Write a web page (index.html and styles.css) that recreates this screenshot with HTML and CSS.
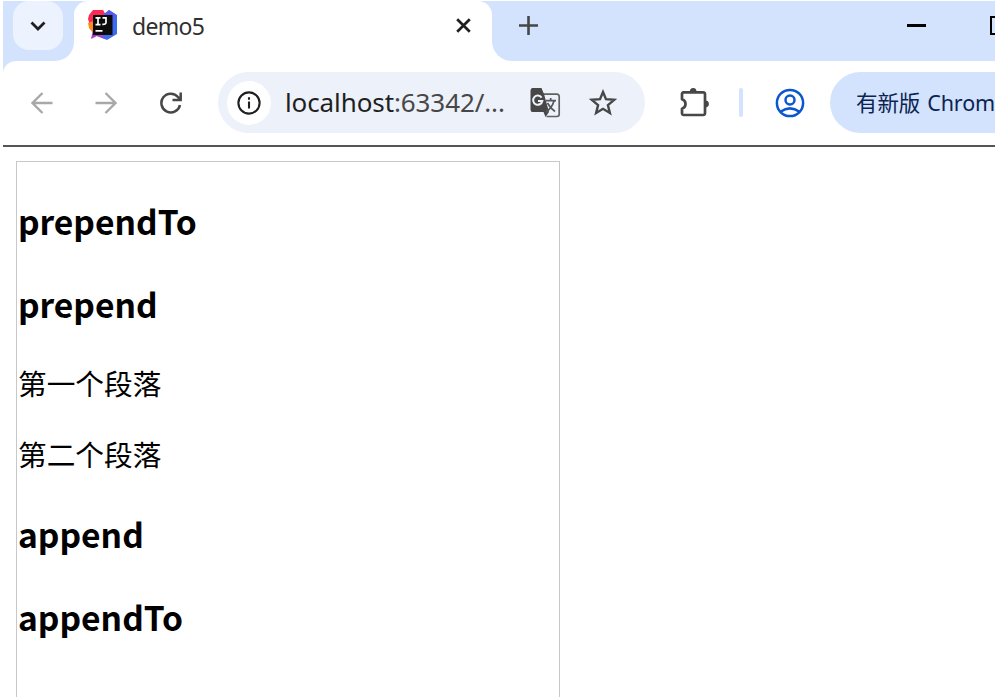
FILE: index.html
```html
<!DOCTYPE html>
<html lang="zh-CN">
<head>
    <meta charset="UTF-8">
    <title>demo5</title>
    <link rel="stylesheet" href="styles.css">
</head>
<body>
    <div class="browser">
        <div class="tab-strip">
            <div class="strip-left">
                <div class="tab-search">
                    <svg width="16" height="10" viewBox="0 0 16 10" fill="none" stroke="#1f1f1f" stroke-width="2.8"><path d="M1.5 1.5L8 8L14.5 1.5"/></svg>
                </div>
            </div>
            <div class="tab-slot">
                <div class="tab">
                    <svg class="favicon" width="30" height="30" viewBox="0 0 30 30">
                        <path d="M1 5L5 0H15L18 5L11 18L2 15L0 9Z" fill="#fe2857"/>
                        <path d="M0 13L6 11L10 22L5 23L1 18Z" fill="#ff8a1e"/>
                        <path d="M16 4L21 0L29 5V24L19 30L9 26Z" fill="#3b6bee"/>
                        <path d="M17 4L21 0L27 4L25 12H17Z" fill="#5b57f5"/>
                        <path d="M5 20L12 22L17 29L9 26L3 29Z" fill="#a73bd0"/>
                        <rect x="5" y="5" width="19.5" height="20" fill="#0b0b0b"/>
                        <path d="M7.5 7.8H12.5M10 7.8V14.6M7.5 14.6H12.5M14.5 7.8H18V12.5Q18 14.6 14.3 14.4M7.5 20.8H14.5" fill="none" stroke="#fff" stroke-width="1.7"/>
                    </svg>
                    <span class="tab-title">demo5</span>
                    <svg class="tab-close" width="15" height="15" viewBox="0 0 15 15" stroke="#1f1f1f" stroke-width="2.7"><path d="M1.2 1.2L13.8 13.8M13.8 1.2L1.2 13.8"/></svg>
                </div>
            </div>
            <div class="strip-right">
                <svg width="19" height="19" viewBox="0 0 19 19" stroke="#444746" stroke-width="2.6"><path d="M9.5 0V19M0 9.5H19"/></svg>
                <div class="window-controls">
                    <span class="minimize"></span>
                    <span class="maximize"></span>
                </div>
            </div>
        </div>

        <div class="toolbar">
            <svg class="back" width="22" height="22" viewBox="0 0 22 22" fill="none" stroke="#a8a8a8" stroke-width="2.3"><path d="M21.5 11H2M11.5 1L1.5 11L11.5 21"/></svg>
            <svg class="forward" width="22" height="22" viewBox="0 0 22 22" fill="none" stroke="#a8a8a8" stroke-width="2.3"><path d="M.5 11H20M10.5 1L20.5 11L10.5 21"/></svg>
            <svg class="reload" width="22" height="22" viewBox="0 0 22 22" fill="none" stroke="#474747" stroke-width="2.5"><path d="M20 13A9.4 9.4 0 1 1 18 5L20.5 7.7M20.7 .5V8H12.5"/></svg>

            <div class="address-bar">
                <div class="site-info">
                    <svg width="24" height="24" viewBox="0 0 24 24" fill="none" stroke="#1f1f1f" stroke-width="2.1"><circle cx="12" cy="12" r="10.6"/><path d="M12 10.5V17.5M12 6.3V8.8"/></svg>
                </div>
                <span class="url">localhost<span class="url-path">:63342/...</span></span>
                <svg class="translate" width="31" height="30" viewBox="0 0 31 30">
                    <path d="M13 6.2H27A2.2 2.2 0 0 1 29.2 8.4V26.3A2.2 2.2 0 0 1 27 28.5H16.5" fill="none" stroke="#5f6163" stroke-width="1.7"/>
                    <path d="M2.5 0H11.5L14 6L19 24L15.5 29L13.5 24H2.5Q.5 24 .5 21.5V2.5Q.5 0 2.5 0Z" fill="#474747"/>
                    <path d="M11.6 9.6A4.6 4.6 0 1 0 12.3 13H8" fill="none" stroke="#ecf1fa" stroke-width="2"/>
                    <path d="M16 12.7H26M20.7 10V12.7M24 13Q22 20 15.7 24.2M17.5 15Q20 20 25 23.5" fill="none" stroke="#55575a" stroke-width="1.7"/>
                </svg>
                <svg class="star" width="28" height="27" viewBox="0 0 28 27" fill="none" stroke="#474747" stroke-width="2.4"><path d="M14 3L17 10.1L25.2 10.8L18.9 16.1L20.9 24L14 19.8L7.1 24L9.1 16.1L2.8 10.8L11 10.1Z"/></svg>
            </div>

            <svg class="extensions" width="30" height="30" viewBox="0 0 30 30" fill="none" stroke="#474747" stroke-width="2.7" stroke-linejoin="round">
                <path d="M3.5 4.3H23.2A1.7 1.7 0 0 1 25 6V25.3A1.7 1.7 0 0 1 23.2 27H3.5A1.6 1.6 0 0 1 2 25.5V20.7A4.9 4.9 0 0 0 2 11.3V6A1.6 1.6 0 0 1 3.5 4.3Z"/>
                <path d="M9.8 4A3.4 3.9 0 0 1 16.6 4ZM25 12.5A3.9 3.4 0 0 1 25 19.3Z" fill="#474747" stroke="none"/>
            </svg>
            <span class="divider"></span>
            <svg class="profile" width="30" height="30" viewBox="0 0 30 30" fill="none" stroke="#0b57d0" stroke-width="2.5"><circle cx="15" cy="15" r="13.1"/><circle cx="15" cy="12" r="4.5"/><path d="M5.5 23.7Q15 17 24.5 23.7"/></svg>
            <div class="update">有新版 Chrom</div>
        </div>

        <div class="page">
            <div class="box">
                <h3>prependTo</h3>
                <h3>prepend</h3>
                <p>第一个段落</p>
                <p>第二个段落</p>
                <h3>append</h3>
                <h3>appendTo</h3>
            </div>
        </div>
    </div>
</body>
</html>
```
FILE: styles.css
```css
* {
    box-sizing: border-box;
}

body {
    margin: 0;
    padding: 1px 11px 0 3px;
    height: 697px;
    overflow: hidden;
    background: #fff;
    font-family: "Noto Sans", "Noto Sans CJK SC", sans-serif;
}

svg {
    display: block;
    flex-shrink: 0;
}

.browser {
    height: 696px;
    overflow: hidden;
    background: #d3e3fd;
}

/* tabs */
.tab-strip {
    display: flex;
    height: 60px;
    background: #fff;
}

.strip-left {
    width: 71px;
    padding-left: 10px;
    background: #d3e3fd;
    border-bottom-right-radius: 19px;
}

.tab-search {
    display: flex;
    align-items: center;
    justify-content: center;
    width: 50px;
    height: 49px;
    background: #ecf3fe;
    border-radius: 16px;
}

.tab-slot {
    width: 418px;
    background: linear-gradient(#d3e3fd 20px, #fff 20px);
}

.tab {
    display: flex;
    align-items: center;
    height: 60px;
    padding: 0 21px 12px 14px;
    background: #fff;
    border-radius: 14px 14px 0 0;
}

.tab-title {
    margin: 2px 0 0 14px;
    font-size: 23px;
    line-height: 30px;
    letter-spacing: -0.7px;
    color: #303030;
}

.tab-close {
    margin-left: auto;
}

.strip-right {
    flex: 1;
    display: flex;
    align-items: center;
    padding: 0 0 12px 27px;
    background: #d3e3fd;
    border-bottom-left-radius: 20px;
}

.window-controls {
    display: flex;
    align-items: center;
    gap: 64px;
    width: 88px;
    margin-left: auto;
    overflow: hidden;
}

.minimize {
    flex-shrink: 0;
    width: 19px;
    height: 3px;
    background: #000;
}

.maximize {
    flex-shrink: 0;
    width: 19px;
    height: 19px;
    border: 2px solid #000;
}

/* toolbar */
.toolbar {
    display: flex;
    align-items: center;
    height: 84px;
    padding: 0 0 1px 28px;
    background: #fff;
    border-top-left-radius: 13px;
    overflow: hidden;
}

.forward {
    margin-left: 42px;
}

.reload {
    margin-left: 43px;
}

.address-bar {
    display: flex;
    align-items: center;
    flex-shrink: 0;
    width: 427px;
    height: 61px;
    margin-left: 36px;
    padding-left: 9px;
    background: #ecf1fa;
    border-radius: 31px;
}

.site-info {
    display: flex;
    align-items: center;
    justify-content: center;
    width: 44px;
    height: 44px;
    background: #fff;
    border-radius: 50%;
}

.url {
    width: 245px;
    margin: 0 0 2px 14px;
    font-size: 26px;
    line-height: 36px;
    letter-spacing: -0.1px;
    white-space: nowrap;
    color: #1f1f1f;
}

.url-path {
    color: #474747;
}

.star {
    margin-left: 28px;
}

.extensions {
    margin-left: 35px;
}

.divider {
    flex-shrink: 0;
    width: 4px;
    height: 29px;
    margin-left: 29px;
    background: #d3e3fd;
    border-radius: 2px;
}

.profile {
    margin-left: 32px;
}

.update {
    flex: 1;
    height: 61px;
    margin-left: 25px;
    padding-left: 26px;
    font-size: 21.5px;
    line-height: 61px;
    word-spacing: 1.5px;
    letter-spacing: -0.1px;
    white-space: nowrap;
    overflow: hidden;
    color: #0a2351;
    background: #d3e3fd;
    border-radius: 31px 0 0 31px;
}

/* page content */
.page {
    height: 552px;
    padding: 14px 13px 0;
    background: #fff;
    border-top: 2px solid #555;
    font-family: "Noto Sans CJK SC", sans-serif;
    font-size: 28.7px;
    color: #000;
}

.box {
    width: 544px;
    height: 600px;
    padding-left: 1px;
    border: 1px solid #c8c8c8;
}

h3 {
    margin: 35px 0;
    font-size: 33.6px;
    line-height: 48px;
}

p {
    margin: 29px 0;
    line-height: 42px;
}

h3 + p {
    margin-top: -1px;
}

p + h3 {
    margin-top: 35px;
}
```
